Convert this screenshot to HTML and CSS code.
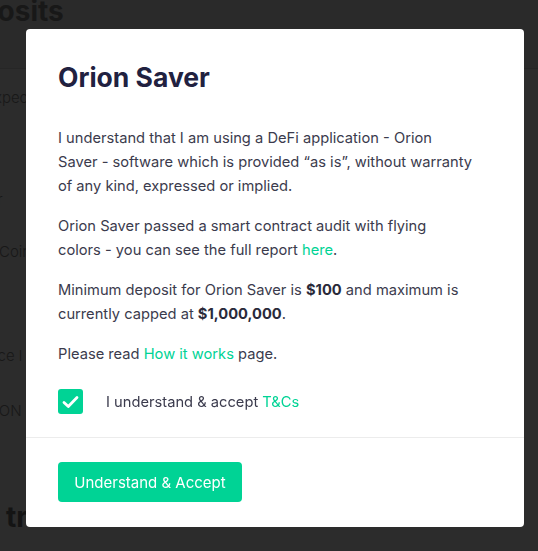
FILE: index.html
```html
<!DOCTYPE html>
<html>
<head>
<meta charset="utf-8">
<link rel="stylesheet" href="styles.css">
</head>
<body>
<div class="page">
  <header class="page-head"><h1 class="page-title">Deposits</h1></header>
  <div class="rows">
    <div class="row r1">Expected</div>
    <div class="row r2">Saver</div>
    <div class="row r3">Coin</div>
    <div class="row r4">Balance l</div>
    <div class="row r5">ORION</div>
  </div>
  <h2 class="section-title">transactions</h2>
</div>

<div class="overlay">
  <div class="modal">
    <div class="modal-body">
      <h2 class="modal-title">Orion Saver</h2>
      <p>I understand that I am using a DeFi application - Orion<br>Saver - software which is provided “as is”, without warranty<br>of any kind, expressed or implied.</p>
      <p>Orion Saver passed a smart contract audit with flying<br>colors - you can see the full report <a href="#">here</a>.</p>
      <p>Minimum deposit for Orion Saver is <b>$100</b> and maximum is<br>currently capped at <b>$1,000,000</b>.</p>
      <p>Please read <a href="#">How it works</a> page.</p>
      <label class="check">
        <span class="box"><svg width="17" height="14" viewBox="0 0 17 14"><path d="M2 7.5 L6.3 11.5 L15 2.5" fill="none" stroke="#fff" stroke-width="2.8" stroke-linecap="round" stroke-linejoin="round"/></svg></span>
        <span class="check-text">I understand &amp; accept <a href="#">T&amp;Cs</a></span>
      </label>
    </div>
    <div class="modal-foot">
      <button class="btn">Understand &amp; Accept</button>
    </div>
  </div>
</div>
</body>
</html>
```

FILE: styles.css
```css
html, body {
  margin: 0;
  padding: 0;
}
body {
  width: 538px;
  height: 551px;
  overflow: hidden;
  background: #2c2c2c;
  font-family: "Inter", "Liberation Sans", sans-serif;
}
.page {
  color: #181818;
}
.page-head {
  height: 68px;
  border-bottom: 1px solid #262626;
  background: #2a2a2a;
}
.page-title {
  margin: 0 0 0 -57px;
  font-size: 28px;
  font-weight: 700;
  line-height: 22px;
}
.rows {
  font-size: 15px;
  font-weight: 300;
}
.row {
  white-space: nowrap;
  line-height: 20px;
}
.r1 { margin-left: -15px; margin-top: 19px; }
.r2 { margin-left: -37px; margin-top: 82px; }
.r3 { margin-left: -1px; margin-top: 32px; }
.r4 { margin-left: -41px; margin-top: 84px; }
.r5 { margin-left: -26px; margin-top: 35px; }
.section-title {
  margin: 81px 0 0 6px;
  font-size: 28px;
  font-weight: 700;
  line-height: 30px;
  color: #141414;
  white-space: nowrap;
}

.overlay {
  position: fixed;
  inset: 0;
}
.modal {
  position: absolute;
  left: 26px;
  top: 29px;
  width: 498px;
  height: 498px;
  background: #fff;
  border-radius: 4px;
  display: flex;
  flex-direction: column;
}
.modal-body {
  padding: 32px 32px 0 32px;
  border-bottom: 1px solid #ececec;
  height: 409px;
  box-sizing: border-box;
}
.modal-title {
  margin: 0 0 33px 0;
  font-size: 26.5px;
  line-height: 32px;
  font-weight: 700;
  color: #212140;
}
.modal-body p {
  margin: 0 0 16px 0;
  font-size: 14.7px;
  line-height: 24px;
  color: #3b3b4d;
  white-space: nowrap;
}
.modal-body a {
  color: #00d395;
  text-decoration: none;
}
.modal-body b {
  color: #2a2a3a;
  font-weight: 700;
}
.check {
  display: flex;
  align-items: center;
  gap: 23px;
  margin-top: 23px;
}
.box {
  width: 25px;
  height: 25px;
  border-radius: 3px;
  background: #00d395;
  display: flex;
  align-items: center;
  justify-content: center;
}
.check-text {
  font-size: 14.7px;
  color: #3b3b4d;
}
.modal-foot {
  padding: 24px 32px;
}
.btn {
  width: 184px;
  height: 40px;
  border: none;
  border-radius: 4px;
  background: #00d395;
  color: #fff;
  font-family: inherit;
  font-size: 15px;
  padding: 0;
}
```
